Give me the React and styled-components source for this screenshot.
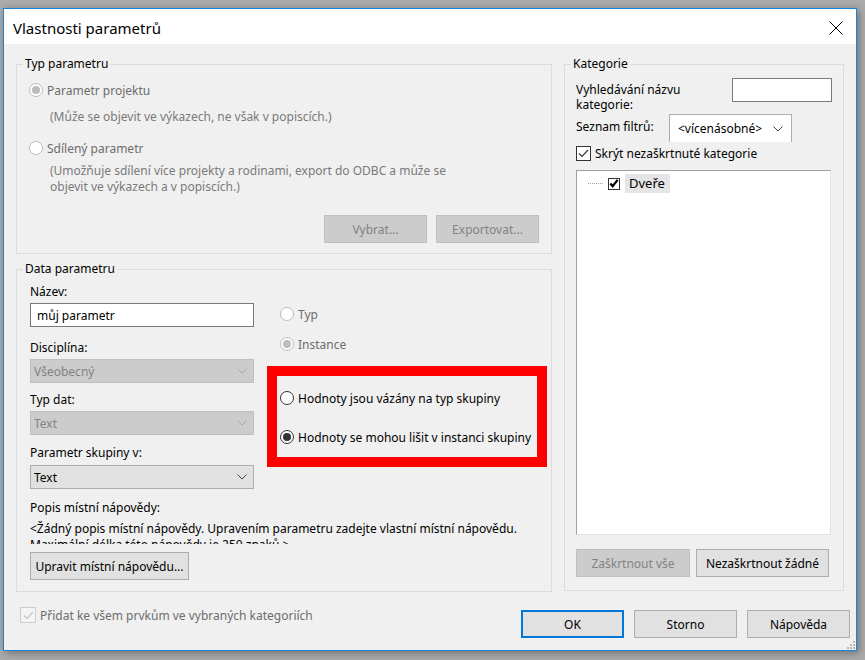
import React from "react";
import styled, { createGlobalStyle } from "styled-components";

const GlobalStyle = createGlobalStyle`
    body {
        margin: 0;
        background-color: #ababab;
        font-family: "Noto Sans", "Open Sans", sans-serif;
        font-size: 12px;
        color: #000000;
    }
`

const Screen = styled.div`
    padding: 8px 9px 9px 3px;
`

const Okno = styled.div`
    position: relative;
    box-sizing: border-box;
    width: 854px;
    height: 643px;
    border: 1px solid #1883d7;
    background-color: #f0f0f0;
    display: flex;
    flex-direction: column;
    box-shadow: 2px 2px 8px rgba(0,0,0,.35);
`

const TitleBar = styled.div`
    height: 35px;
    background-color: #ffffff;
    display: flex;
    align-items: center;
    justify-content: space-between;
    padding: 2px 13px 0 9px;
    box-sizing: border-box;
`

const Titulek = styled.span`
    font-size: 15px;
`

const Telo = styled.div`
    display: flex;
    gap: 12px;
    padding: 12px 12px 0 12px;
`

const LevySloupec = styled.div`
    display: flex;
    flex-direction: column;
    gap: 7px;
`

const Skupina = styled.fieldset`
    box-sizing: border-box;
    margin: 0;
    padding: 0;
    min-width: 0;
    width: ${(p) => p.$w}px;
    height: ${(p) => p.$h}px;
    border: 1px solid #dcdcdc;
`

const Legenda = styled.legend`
    margin-left: 6px;
    padding: 0 2px;
    line-height: 16px;
`

const Obsah = styled.div`
    display: flex;
    flex-direction: column;
    padding: 0 ${(p) => p.$pr || 0}px 0 ${(p) => p.$pl || 0}px;
`

const RadioRow = styled.div`
    display: flex;
    align-items: center;
    gap: 4px;
    height: 16px;
    margin-top: ${(p) => p.$mt || 0}px;
    color: ${(p) => (p.$disabled ? "#6d6d6d" : "#000000")};
`

const Kolecko = styled.span`
    box-sizing: border-box;
    width: 14px;
    height: 14px;
    border-radius: 50%;
    border: 1px solid ${(p) => (p.$disabled ? "#bcbcbc" : "#333333")};
    background-color: #ffffff;
    display: flex;
    align-items: center;
    justify-content: center;
    &::after {
        content: "";
        display: ${(p) => (p.$checked ? "block" : "none")};
        width: 8px;
        height: 8px;
        border-radius: 50%;
        background-color: ${(p) => (p.$disabled ? "#bcbcbc" : "#333333")};
    }
`

const Popis = styled.div`
    color: #7a7a7a;
    line-height: 16px;
    margin-top: ${(p) => p.$mt || 0}px;
    margin-left: 21px;
`

const RadaTlacitek = styled.div`
    display: flex;
    justify-content: ${(p) => p.$justify || "flex-start"};
    gap: ${(p) => p.$gap || 9}px;
    margin-top: ${(p) => p.$mt || 0}px;
    padding-right: ${(p) => p.$pr || 0}px;
`

const Tlacitko = styled.button`
    box-sizing: border-box;
    width: ${(p) => p.$w}px;
    height: ${(p) => p.$h || 28}px;
    font-family: inherit;
    font-size: 12px;
    padding: 0;
    background-color: ${(p) => (p.disabled ? "#cccccc" : "#e1e1e1")};
    border: ${(p) => (p.$default ? "2px solid #0078d7" : p.disabled ? "1px solid #bfbfbf" : "1px solid #adadad")};
    color: ${(p) => (p.disabled ? "#838383" : "#000000")};
`

const DvaSloupce = styled.div`
    display: flex;
    gap: 13px;
`

const Pole = styled.div`
    display: flex;
    flex-direction: column;
    width: 224px;
`

const Popisek = styled.div`
    line-height: ${(p) => p.$lh || 16}px;
    margin-top: ${(p) => p.$mt || 0}px;
    color: ${(p) => (p.$disabled ? "#6d6d6d" : "#000000")};
`

const Vstup = styled.div`
    box-sizing: border-box;
    width: ${(p) => p.$w}px;
    height: 24px;
    margin-top: ${(p) => p.$mt || 0}px;
    background-color: #ffffff;
    border: 1px solid #7a7a7a;
    padding-left: 6px;
    display: flex;
    align-items: center;
`

const Vyber = styled.div`
    box-sizing: border-box;
    width: 224px;
    height: 24px;
    margin-top: ${(p) => p.$mt || 0}px;
    background-color: ${(p) => (p.$disabled ? "#cccccc" : "#e1e1e1")};
    border: 1px solid ${(p) => (p.$disabled ? "#bfbfbf" : "#adadad")};
    color: ${(p) => (p.$disabled ? "#838383" : "#000000")};
    padding: 0 6px 0 3px;
    display: flex;
    align-items: center;
    justify-content: space-between;
`

const PravySloupec = styled.div`
    display: flex;
    flex-direction: column;
`

const CervenyRamecek = styled.div`
    box-sizing: border-box;
    width: 280px;
    height: 101px;
    margin-top: 14px;
    border: 10px solid #ff0000;
    padding: 14px 0 0 3px;
    display: flex;
    flex-direction: column;
    gap: 23px;
`

const Napoveda = styled.div`
    line-height: 16px;
    height: 23px;
    margin-top: 5px;
    overflow: hidden;
    width: 510px;
`

const Ctverecek = styled.span`
    box-sizing: border-box;
    width: ${(p) => p.$size || 15}px;
    height: ${(p) => p.$size || 15}px;
    border: 1px solid ${(p) => (p.$disabled ? "#cccccc" : "#333333")};
    background-color: ${(p) => (p.$disabled ? "#f4f4f4" : "#ffffff")};
    display: flex;
    align-items: center;
    justify-content: center;
    flex-shrink: 0;
`

const CheckRow = styled.div`
    display: flex;
    align-items: center;
    gap: 4px;
    height: 16px;
    margin-top: ${(p) => p.$mt || 0}px;
    color: ${(p) => (p.$disabled ? "#6d6d6d" : "#000000")};
`

const RadaHledani = styled.div`
    display: flex;
    justify-content: space-between;
    align-items: flex-start;
    margin-top: ${(p) => p.$mt || 0}px;
`

const Filtr = styled.div`
    box-sizing: border-box;
    width: 123px;
    height: 28px;
    background-color: #ffffff;
    border: 1px solid #adadad;
    border-bottom: none;
    padding: 0 8px 0 8px;
    display: flex;
    align-items: center;
    justify-content: space-between;
    margin-right: 40px;
`

const Strom = styled.div`
    box-sizing: border-box;
    width: 255px;
    height: 365px;
    margin-top: 9px;
    background-color: #ffffff;
    border: 1px solid;
    border-color: #a0a0a0 #e3e3e3 #e3e3e3 #a0a0a0;
    padding: 3px 0 0 11px;
`

const PolozkaStromu = styled.div`
    display: flex;
    align-items: center;
    height: 19px;
`

const Tecky = styled.span`
    width: 15px;
    border-top: 1px dotted #a0a0a0;
    margin-right: 5px;
`

const Oznaceno = styled.span`
    background-color: #e5e5e5;
    padding: 0 5px 0 4px;
    margin-left: 5px;
    line-height: 19px;
    font-size: 13px;
`

const Spodek = styled.div`
    display: flex;
    justify-content: space-between;
    align-items: flex-start;
    padding: 0 6px 0 16px;
`

const Uchyt = styled.div`
    position: absolute;
    right: 1px;
    bottom: 1px;
    display: grid;
    grid-template-columns: repeat(3, 2px);
    gap: 1px;
`

const Bod = styled.span`
    width: 2px;
    height: 2px;
    background-color: ${(p) => (p.$on ? "#b8b8b8" : "transparent")};
`

const Sipka = ({ color }) => (
    <svg width="10" height="6" viewBox="0 0 10 6">
        <polyline points="0.5,0.5 5,5 9.5,0.5" fill="none" stroke={color} strokeWidth="1" />
    </svg>
)

const Fajfka = ({ color, bold }) => (
    <svg width="11" height="11" viewBox="0 0 11 11">
        <polyline points={bold ? "1.5,5.5 4,8.5 9.5,1.5" : "1,5.5 4,8.5 10,2"} fill="none" stroke={color} strokeWidth={bold ? 2.4 : 1.2} />
    </svg>
)

const Radio = ({ checked, disabled, children, mt }) => (
    <RadioRow $disabled={disabled} $mt={mt}>
        <Kolecko $checked={checked} $disabled={disabled} />
        {children}
    </RadioRow>
)

export default function App() {
    return (
        <Screen>
            <GlobalStyle />
            <Okno>
                <TitleBar>
                    <Titulek>Vlastnosti parametrů</Titulek>
                    <svg width="14" height="14" viewBox="0 0 14 14">
                        <path d="M0.5 0.5 L13.5 13.5 M13.5 0.5 L0.5 13.5" stroke="#000" strokeWidth="1" />
                    </svg>
                </TitleBar>

                <Telo>
                    <LevySloupec>
                        <Skupina $w={536} $h={198}>
                            <Legenda>Typ parametru</Legenda>
                            <Obsah $pl={12} $pr={12}>
                                <Radio checked disabled mt={10}>Parametr projektu</Radio>
                                <Popis $mt={11}>(Může se objevit ve výkazech, ne však v popiscích.)</Popis>
                                <Radio disabled mt={15}>Sdílený parametr</Radio>
                                <Popis $mt={7}>
                                    (Umožňuje sdílení více projekty a rodinami, export do ODBC a může se
                                    <br />
                                    objevit ve výkazech a v popiscích.)
                                </Popis>
                                <RadaTlacitek $justify="flex-end" $mt={20}>
                                    <Tlacitko $w={103} disabled>Vybrat...</Tlacitko>
                                    <Tlacitko $w={103} disabled>Exportovat...</Tlacitko>
                                </RadaTlacitek>
                            </Obsah>
                        </Skupina>

                        <Skupina $w={536} $h={331}>
                            <Legenda>Data parametru</Legenda>
                            <Obsah $pl={13}>
                                <DvaSloupce>
                                    <Pole>
                                        <Popisek $mt={7}>Název:</Popisek>
                                        <Vstup $w={224} $mt={3}>můj parametr</Vstup>
                                        <Popisek $mt={13}>Disciplína:</Popisek>
                                        <Vyber $disabled $mt={3}>Všeobecný<Sipka color="#a8a8a8" /></Vyber>
                                        <Popisek $mt={9}>Typ dat:</Popisek>
                                        <Vyber $disabled $mt={3}>Text<Sipka color="#a8a8a8" /></Vyber>
                                        <Popisek $mt={10}>Parametr skupiny v:</Popisek>
                                        <Vyber $mt={4}>Text<Sipka color="#444444" /></Vyber>
                                    </Pole>
                                    <PravySloupec>
                                        <Obsah $pl={13}>
                                            <Radio disabled mt={29}>Typ</Radio>
                                            <Radio checked disabled mt={14}>Instance</Radio>
                                        </Obsah>
                                        <CervenyRamecek>
                                            <Radio>Hodnoty jsou vázány na typ skupiny</Radio>
                                            <Radio checked>Hodnoty se mohou lišit v instanci skupiny</Radio>
                                        </CervenyRamecek>
                                    </PravySloupec>
                                </DvaSloupce>
                                <Popisek $mt={11}>Popis místní nápovědy:</Popisek>
                                <Napoveda>
                                    &lt;Žádný popis místní nápovědy. Upravením parametru zadejte vlastní místní nápovědu.
                                    Maximální délka této nápovědy je 250 znaků.&gt;
                                </Napoveda>
                                <RadaTlacitek $mt={8}>
                                    <Tlacitko $w={159}>Upravit místní nápovědu...</Tlacitko>
                                </RadaTlacitek>
                            </Obsah>
                        </Skupina>
                    </LevySloupec>

                    <Skupina $w={280} $h={535}>
                        <Legenda>Kategorie</Legenda>
                        <Obsah $pl={11} $pr={11}>
                            <RadaHledani $mt={6}>
                                <Popisek $mt={4} $lh={15}>Vyhledávání názvu<br />kategorie:</Popisek>
                                <Vstup $w={100} />
                            </RadaHledani>
                            <RadaHledani $mt={2}>
                                <Popisek $mt={5}>Seznam filtrů:</Popisek>
                                <Filtr>&lt;vícenásobné&gt;<Sipka color="#444444" /></Filtr>
                            </RadaHledani>
                            <CheckRow $mt={3}>
                                <Ctverecek><Fajfka color="#333333" /></Ctverecek>
                                Skrýt nezaškrtnuté kategorie
                            </CheckRow>
                            <Strom>
                                <PolozkaStromu>
                                    <Tecky />
                                    <Ctverecek $size={12}><Fajfka color="#000000" bold /></Ctverecek>
                                    <Oznaceno>Dveře</Oznaceno>
                                </PolozkaStromu>
                            </Strom>
                            <RadaTlacitek $gap={6} $mt={14}>
                                <Tlacitko $w={114} disabled>Zaškrtnout vše</Tlacitko>
                                <Tlacitko $w={133}>Nezaškrtnout žádné</Tlacitko>
                            </RadaTlacitek>
                        </Obsah>
                    </Skupina>
                </Telo>

                <Spodek>
                    <CheckRow $disabled $mt={15}>
                        <Ctverecek $disabled $size={16}><Fajfka color="#c4c4c4" /></Ctverecek>
                        Přidat ke všem prvkům ve vybraných kategoriích
                    </CheckRow>
                    <RadaTlacitek $gap={10} $mt={18}>
                        <Tlacitko $w={103} $default>OK</Tlacitko>
                        <Tlacitko $w={103}>Storno</Tlacitko>
                        <Tlacitko $w={103}>Nápověda</Tlacitko>
                    </RadaTlacitek>
                </Spodek>

                <Uchyt>
                    {[0, 0, 1, 0, 1, 1, 1, 1, 1].map((on, i) => (
                        <Bod key={i} $on={on} />
                    ))}
                </Uchyt>
            </Okno>
        </Screen>
    )
}
